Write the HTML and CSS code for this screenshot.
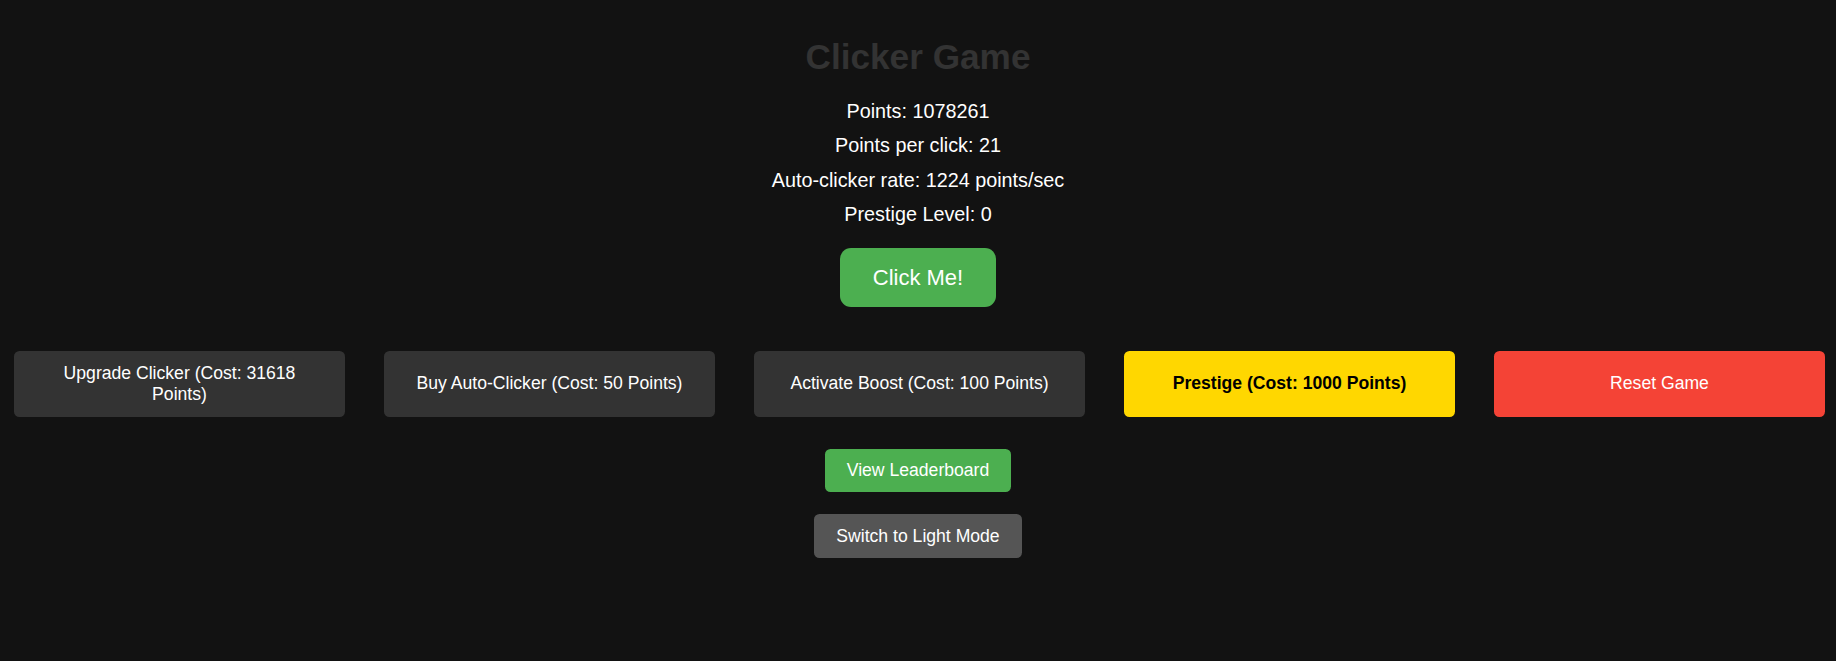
FILE: index.html
```html
<!DOCTYPE html>
<html lang="en">
<head>
<meta charset="utf-8">
<title>Clicker Game</title>
<link rel="stylesheet" href="styles.css">
</head>
<body>
<main class="game">
  <h1 class="title">Clicker Game</h1>
  <div class="stats">
    <div class="stat">Points: 1078261</div>
    <div class="stat">Points per click: 21</div>
    <div class="stat">Auto-clicker rate: 1224 points/sec</div>
    <div class="stat">Prestige Level: 0</div>
  </div>
  <button class="click-btn">Click Me!</button>
  <div class="upgrades">
    <button class="up-btn">Upgrade Clicker (Cost: 31618 Points)</button>
    <button class="up-btn">Buy Auto-Clicker (Cost: 50 Points)</button>
    <button class="up-btn">Activate Boost (Cost: 100 Points)</button>
    <button class="up-btn prestige">Prestige (Cost: 1000 Points)</button>
    <button class="up-btn reset">Reset Game</button>
  </div>
  <button class="small-btn leaderboard">View Leaderboard</button>
  <button class="small-btn mode">Switch to Light Mode</button>
</main>
</body>
</html>
```
FILE: styles.css
```css
html, body {
  margin: 0;
  padding: 0;
  background: #121212;
}
body {
  font-family: "Liberation Sans", Arial, sans-serif;
  color: #ffffff;
  width: 1836px;
  height: 661px;
  overflow: hidden;
}
.game {
  display: flex;
  flex-direction: column;
  align-items: center;
  padding-top: 37px;
  text-align: center;
}
.title {
  margin: 0 0 22.5px;
  font-size: 35.2px;
  font-weight: bold;
  color: #333333;
  line-height: normal;
}
.stats {
  display: flex;
  flex-direction: column;
  gap: 11.5px;
  font-size: 19.8px;
  color: #ffffff;
}
button {
  font-family: "Liberation Sans", Arial, sans-serif;
  border: none;
  color: #ffffff;
  cursor: pointer;
}
.click-btn {
  margin-top: 22px;
  font-size: 22px;
  padding: 16.5px 33px;
  background: #4caf50;
  border-radius: 11px;
}
.upgrades {
  align-self: stretch;
  display: flex;
  gap: 39px;
  padding: 0 11px 0 14px;
  margin-top: 44px;
}
.up-btn {
  flex: 1 1 0;
  min-width: 0;
  font-size: 17.6px;
  padding: 11.75px 22px;
  background: #333333;
  border-radius: 5.5px;
  line-height: normal;
}
.prestige {
  background: #ffd700;
  color: #000000;
  font-weight: bold;
}
.reset {
  background: #f44336;
}
.small-btn {
  font-size: 17.6px;
  padding: 11.4px 22px;
  border-radius: 5.5px;
  line-height: normal;
}
.leaderboard {
  margin-top: 32px;
  background: #4caf50;
}
.mode {
  margin-top: 22px;
  background: #555555;
}
```
